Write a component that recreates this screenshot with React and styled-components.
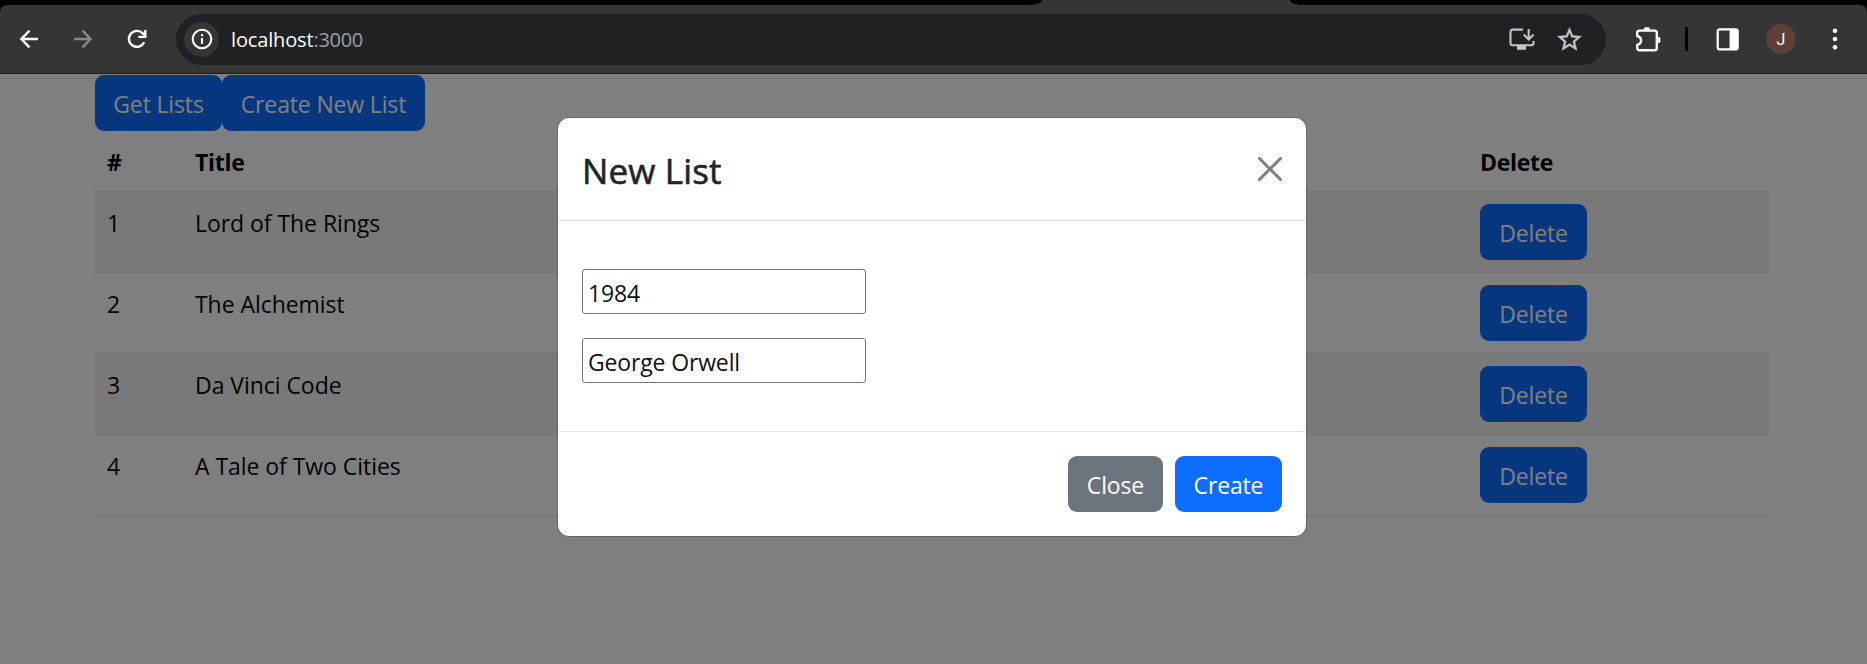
import React from "react";
import styled, { createGlobalStyle, css } from "styled-components";

const GlobalStyle = createGlobalStyle`
  * { box-sizing: border-box; }
  body {
    margin: 0;
    background: #000;
    font-family: "Open Sans", "Noto Sans", sans-serif;
    overflow: hidden;
  }
`;

const Window = styled.div`
  display: flex;
  flex-direction: column;
  height: 664px;
`;

const TabStrip = styled.div`
  display: flex;
  justify-content: space-between;
  flex: none;
  height: 5px;
  background: #353535;
`;

const InactiveTabs = styled.div`
  width: ${(p) => p.$width}px;
  background: #000;
  border-radius: ${(p) => (p.$side === "left" ? "0 0 12px 0 / 0 0 5px 0" : "0 0 0 12px / 0 0 0 5px")};
`;

const Toolbar = styled.div`
  display: flex;
  align-items: center;
  flex: none;
  height: 69px;
  padding: 0 19px 0 16px;
  background: #353535;
  border-bottom: 1px solid #1c1c1c;
  border-radius: 7px 7px 0 0;
`;

const ToolbarBacking = styled.div`
  flex: none;
  background: #000;
`;

const Icon = styled.svg`
  display: block;
  flex: none;
  width: ${(p) => p.$size || 26}px;
  height: ${(p) => p.$size || 26}px;
  margin-left: ${(p) => p.$gap || 0}px;
  color: ${(p) => p.$color || "#fff"};
  fill: none;
  stroke: currentColor;
  stroke-width: 2.4;
  overflow: visible;
`;

const AddressBar = styled.div`
  display: flex;
  align-items: center;
  width: 1431px;
  height: 51px;
  margin-left: 26px;
  padding: 0 22px 0 8px;
  border-radius: 26px;
  background: #202124;
`;

const SiteInfo = styled.div`
  display: flex;
  align-items: center;
  justify-content: center;
  width: 35px;
  height: 35px;
  border-radius: 50%;
  background: #353535;
`;

const Address = styled.div`
  flex: 1;
  margin-left: 12px;
  padding-top: 1px;
  font-size: 20px;
  line-height: 28px;
  letter-spacing: -0.15px;
  color: #fff;
`;

const Port = styled.span`
  color: #9aa0a6;
  letter-spacing: -0.3px;
`;

const Separator = styled.div`
  width: 3px;
  height: 24px;
  margin-left: 24px;
  border-radius: 1px;
  background: #000;
`;

const Avatar = styled.div`
  display: flex;
  align-items: center;
  justify-content: center;
  width: 30px;
  height: 30px;
  margin-left: 25px;
  border-radius: 50%;
  background: #5d4037;
  color: #fff;
  font: 16px Roboto, sans-serif;
`;

const Page = styled.main`
  position: relative;
  flex: 1;
  padding: 1px 98px 0 95px;
  background: #fff;
`;

const Backdrop = styled.div`
  position: absolute;
  inset: 0;
  padding-top: 43px;
  background: rgba(0, 0, 0, 0.5);
`;

const Actions = styled.div`
  display: flex;
`;

const Button = styled.button`
  width: ${(p) => p.$width}px;
  height: 56px;
  padding: 1px 0 0;
  border: 0;
  border-radius: 9px;
  background: ${(p) => (p.$secondary ? "#6c757d" : "#0d6efd")};
  color: #fff;
  font-family: inherit;
  font-size: 23px;
  line-height: 36px;
  letter-spacing: -0.15px;
  white-space: nowrap;
`;

const Table = styled.table`
  width: 100%;
  table-layout: fixed;
  border-collapse: collapse;
  color: #000;
  font-size: 23px;
  line-height: 36px;
  letter-spacing: -0.05px;
`;

const Column = styled.col`
  width: ${(p) => (p.$width ? `${p.$width}px` : "auto")};
`;

const cell = css`
  padding: 13px 12px 11px;
  text-align: left;
  vertical-align: top;
  box-shadow: inset 0 -1px #dee2e6;
`;

const HeadCell = styled.th`
  ${cell}
  height: 61px;
  font-weight: 700;
  letter-spacing: -0.3px;
`;

const Cell = styled.td`
  ${cell}
  height: 81px;
`;

const ButtonCell = styled(Cell)`
  padding: 12px 12px 13px;
  line-height: 0;
`;

const Row = styled.tr`
  background: ${(p) => (p.$striped ? "#f2f2f2" : "#fff")};
`;

const Dialog = styled.section`
  width: 750px;
  height: 420px;
  margin-left: 557px;
  border: 1px solid rgba(0, 0, 0, 0.18);
  border-radius: 12px;
  background: #fff;
  background-clip: padding-box;
`;

const DialogHeader = styled.header`
  display: flex;
  align-items: center;
  justify-content: space-between;
  height: 103px;
  padding: 0 24px;
  border-bottom: 1px solid #dee2e6;
`;

const DialogTitle = styled.h4`
  margin: 4px 0 0;
  color: #212529;
  font-size: 35px;
  font-weight: 500;
  line-height: 54px;
  letter-spacing: 0.15px;
  -webkit-text-stroke: 0.6px #212529;
`;

const CloseIcon = styled.svg`
  width: 24px;
  height: 24px;
  opacity: 0.5;
`;

const DialogBody = styled.div`
  display: flex;
  flex-direction: column;
  gap: 24px;
  height: 210px;
  padding: 48px 24px;
`;

const TextInput = styled.input`
  width: 284px;
  height: 45px;
  padding: 2px 5px 0;
  border: 1px solid #767676;
  border-radius: 3px;
  outline: 0;
  background: #fff;
  color: #111;
  font-family: inherit;
  font-size: 23px;
  letter-spacing: -0.15px;
`;

const DialogFooter = styled.footer`
  display: flex;
  justify-content: flex-end;
  gap: 12px;
  padding: 24px;
  border-top: 1px solid #dee2e6;
`;

const titles = ["Lord of The Rings", "The Alchemist", "Da Vinci Code", "A Tale of Two Cities"];

function BrowserBar() {
  return (
    <>
      <TabStrip>
        <InactiveTabs $side="left" $width={1042} />
        <InactiveTabs $side="right" $width={577} />
      </TabStrip>
      <ToolbarBacking>
        <Toolbar>
          <Icon viewBox="0 0 26 26">
            <path d="M22 13H6M13.5 4.7 5.4 13l8.1 8.3" />
          </Icon>
          <Icon viewBox="0 0 26 26" $gap={28} $color="#8a8a8a">
            <path d="M4 13h16M12.5 4.7l8.1 8.3-8.1 8.3" />
          </Icon>
          <Icon viewBox="0 0 26 26" $gap={28}>
            <path d="M20.2 16.2A8 8 0 1 1 18.8 7.4L20.5 9" />
            <path d="M21.3 4v6.9h-7M20.5 9" />
          </Icon>
          <AddressBar>
            <SiteInfo>
              <Icon viewBox="0 0 22 22" $size={22}>
                <circle cx="11" cy="11" r="9.3" strokeWidth="2.1" />
                <path d="M11 10v6M11 6v2.2" strokeWidth="2.1" />
              </Icon>
            </SiteInfo>
            <Address>
              localhost<Port>:3000</Port>
            </Address>
            <Icon viewBox="0 0 26 26" $color="#c4c4c4">
              <path d="M16 3.6H5.5a2 2 0 0 0-2 2v11.6a2 2 0 0 0 2 2h19a2 2 0 0 0 2-2V15" strokeWidth="2.1" />
              <path d="M21.7 3v10M16.8 8.5l4.9 4.9 4.9-4.9" strokeWidth="2.1" />
              <path d="M10 20h9v3.8h-9z" fill="currentColor" stroke="none" />
            </Icon>
            <Icon viewBox="0 0 24 24" $gap={22} $size={29} $color="#c4c4c4">
              <path
                d="m22 9.24-7.19-.62L12 2 9.19 8.63 2 9.24l5.46 4.73L5.82 21 12 17.27 18.18 21l-1.63-7.03L22 9.24zM12 15.4l-3.76 2.27 1-4.28-3.32-2.88 4.38-.38L12 6.1l1.71 4.04 4.38.38-3.32 2.88 1 4.28L12 15.4z"
                fill="currentColor"
                stroke="currentColor"
                strokeWidth="0.3"
              />
            </Icon>
          </AddressBar>
          <Icon viewBox="0 0 26 26" $gap={29}>
            <path d="M2.2 10V6.6a2 2 0 0 1 2-2h15.6a2 2 0 0 1 2 2v15.6a2 2 0 0 1-2 2H4.2a2 2 0 0 1-2-2v-3.4c5.2-1.4 5.2-7.4 0-8.8z" />
            <path d="M8.4 4.5a3.4 3.4 0 0 1 6.8 0zM22 10.4a3.6 3.6 0 0 1 0 7.2z" fill="currentColor" stroke="none" />
          </Icon>
          <Separator />
          <Icon viewBox="0 0 26 26" $gap={27}>
            <rect x="2.7" y="3.4" width="20" height="20" rx="1.8" strokeWidth="2.2" />
            <path d="M14.6 3.4h8v20h-8z" fill="currentColor" stroke="none" />
          </Icon>
          <Avatar>J</Avatar>
          <Icon viewBox="0 0 26 26" $gap={26}>
            <g fill="currentColor" stroke="none">
              <circle cx="13" cy="4.8" r="2.3" />
              <circle cx="13" cy="13" r="2.3" />
              <circle cx="13" cy="21.2" r="2.3" />
            </g>
          </Icon>
        </Toolbar>
      </ToolbarBacking>
    </>
  );
}

function ListTable() {
  return (
    <Table>
      <colgroup>
        <Column $width={88} />
        <Column />
        <Column $width={301} />
      </colgroup>
      <thead>
        <Row>
          <HeadCell>#</HeadCell>
          <HeadCell>Title</HeadCell>
          <HeadCell>Delete</HeadCell>
        </Row>
      </thead>
      <tbody>
        {titles.map((title, i) => (
          <Row key={title} $striped={i % 2 === 0}>
            <Cell>{i + 1}</Cell>
            <Cell>{title}</Cell>
            <ButtonCell>
              <Button $width={107}>Delete</Button>
            </ButtonCell>
          </Row>
        ))}
      </tbody>
    </Table>
  );
}

function NewListDialog() {
  return (
    <Dialog role="dialog">
      <DialogHeader>
        <DialogTitle>New List</DialogTitle>
        <CloseIcon viewBox="0 0 16 16">
          <path d="M.293.293a1 1 0 0 1 1.414 0L8 6.586 14.293.293a1 1 0 1 1 1.414 1.414L9.414 8l6.293 6.293a1 1 0 0 1-1.414 1.414L8 9.414l-6.293 6.293a1 1 0 0 1-1.414-1.414L6.586 8 .293 1.707a1 1 0 0 1 0-1.414z" />
        </CloseIcon>
      </DialogHeader>
      <DialogBody>
        <TextInput defaultValue="1984" />
        <TextInput defaultValue="George Orwell" />
      </DialogBody>
      <DialogFooter>
        <Button $width={95} $secondary>Close</Button>
        <Button $width={107}>Create</Button>
      </DialogFooter>
    </Dialog>
  );
}

export default function App() {
  return (
    <Window>
      <GlobalStyle />
      <BrowserBar />
      <Page>
        <Actions>
          <Button $width={127}>Get Lists</Button>
          <Button $width={203}>Create New List</Button>
        </Actions>
        <ListTable />
        <Backdrop>
          <NewListDialog />
        </Backdrop>
      </Page>
    </Window>
  );
}
